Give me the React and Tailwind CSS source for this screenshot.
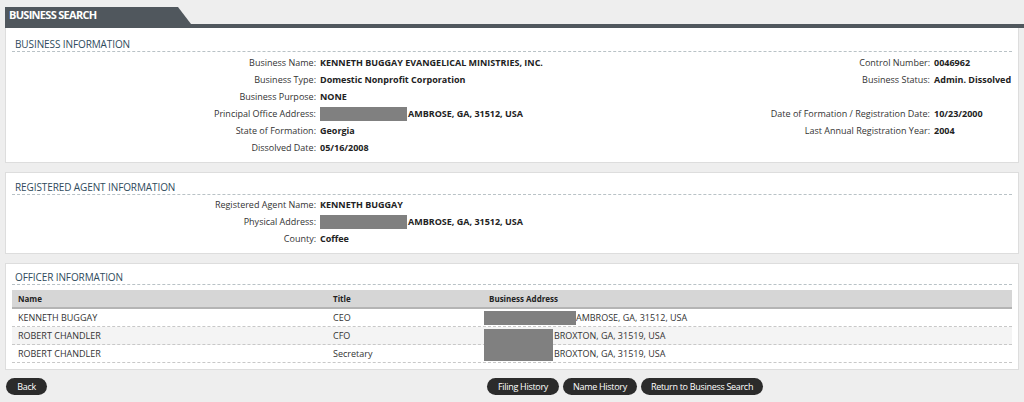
const REDACT = 'bg-[#808080]'

const Field = ({ label, value, redact, labelW }) => (
  <div className="flex items-center h-[17px]">
    <span className={`${labelW} text-right pr-[4px] text-[#333]`}>{label}</span>
    {redact && <span className={`inline-block w-[87px] h-[14px] mr-[1px] ${REDACT}`} />}
    <span className="font-bold text-[#222]">{value}</span>
  </div>
)

const SectionTitle = ({ children }) => (
  <div className="mx-[6px] pl-[3px] h-[15px] leading-[14px] text-[10px] text-[#2f4b5c] border-b border-dashed border-[#b9c2c6] tracking-[-0.1px]">
    {children}
  </div>
)

const officers = [
  { name: 'KENNETH BUGGAY', title: 'CEO', addr: 'AMBROSE, GA, 31512, USA', pad: 'pl-[92px]', bg: 'bg-white' },
  { name: 'ROBERT CHANDLER', title: 'CFO', addr: 'BROXTON, GA, 31519, USA', pad: 'pl-[70px]', bg: 'bg-[#f4f4f4]' },
  { name: 'ROBERT CHANDLER', title: 'Secretary', addr: 'BROXTON, GA, 31519, USA', pad: 'pl-[70px]', bg: 'bg-white' },
]

export default function App() {
  return (
    <div className="w-[1024px] h-[402px] bg-[#eeeeee] overflow-hidden text-[9px] font-['Open_Sans',sans-serif]">
      {/* Tab bar */}
      <div className="pt-[7px] px-[5px]">
        <div className="flex">
          <div className="w-[186px] h-[17px] bg-[#50575d] [clip-path:polygon(0_0,173px_0,186px_17px,0_17px)] pl-[4px] flex items-center text-white text-[11px] font-bold tracking-[-0.7px]">
            BUSINESS SEARCH
          </div>
        </div>
        <div className="h-[4px] bg-[#50575d] mr-[-5px]" />
      </div>

      {/* Business information */}
      <div className="mx-[5px] bg-white border border-t-0 border-[#dddddd] pt-[9px] h-[135px]">
        <SectionTitle>BUSINESS INFORMATION</SectionTitle>
        <div className="flex pt-[2px]">
          <div className="w-[600px]">
            <Field labelW="w-[314px]" label="Business Name:" value="KENNETH BUGGAY EVANGELICAL MINISTRIES, INC." />
            <Field labelW="w-[314px]" label="Business Type:" value="Domestic Nonprofit Corporation" />
            <Field labelW="w-[314px]" label="Business Purpose:" value="NONE" />
            <Field labelW="w-[314px]" label="Principal Office Address:" value="AMBROSE, GA, 31512, USA" redact />
            <Field labelW="w-[314px]" label="State of Formation:" value="Georgia" />
            <Field labelW="w-[314px]" label="Dissolved Date:" value="05/16/2008" />
          </div>
          <div className="flex-1">
            <Field labelW="w-[328px]" label="Control Number:" value="0046962" />
            <Field labelW="w-[328px]" label="Business Status:" value="Admin. Dissolved" />
            <div className="h-[17px]" />
            <Field labelW="w-[328px]" label="Date of Formation / Registration Date:" value="10/23/2000" />
            <Field labelW="w-[328px]" label="Last Annual Registration Year:" value="2004" />
          </div>
        </div>
      </div>

      {/* Registered agent */}
      <div className="mx-[5px] mt-[9px] bg-white border border-[#dddddd] pt-[7px] h-[82px]">
        <SectionTitle>REGISTERED AGENT INFORMATION</SectionTitle>
        <div className="pt-[1px]">
          <Field labelW="w-[314px]" label="Registered Agent Name:" value="KENNETH BUGGAY" />
          <Field labelW="w-[314px]" label="Physical Address:" value="AMBROSE, GA, 31512, USA" redact />
          <Field labelW="w-[314px]" label="County:" value="Coffee" />
        </div>
      </div>

      {/* Officer information */}
      <div className="mx-[5px] mt-[9px] bg-white border border-[#dddddd] pt-[6px] h-[107px]">
        <SectionTitle>OFFICER INFORMATION</SectionTitle>
        <div className="mx-[6px] mt-[5px] relative">
          <div className="flex h-[19px] items-center bg-[#d6d6d6] border-b-2 border-[#b4b4b4] font-bold text-[8px] text-[#222]">
            <span className="w-[321px] pl-[6px]">Name</span>
            <span className="w-[151px]">Title</span>
            <span className="pl-[5px]">Business Address</span>
          </div>
          {officers.map((o, i) => (
            <div key={i} className={`flex h-[18px] items-center border-b border-dashed border-[#c8c8c8] text-[#333] ${o.bg}`}>
              <span className="w-[321px] pl-[6px]">{o.name}</span>
              <span className="w-[151px]">{o.title}</span>
              <span className={o.pad}>{o.addr}</span>
            </div>
          ))}
          <div className={`absolute left-[472px] top-[21px] w-[92px] h-[14px] ${REDACT}`} />
          <div className={`absolute left-[472px] top-[39px] w-[69px] h-[32px] ${REDACT}`} />
        </div>
      </div>

      {/* Buttons */}
      <div className="flex items-center mt-[8px] pl-[6px] text-white text-[9px] tracking-[-0.3px]">
        <button className="h-[17px] w-[41px] rounded-full bg-[#2b2b2b]">Back</button>
        <div className="flex gap-[4px] ml-[440px]">
          <button className="h-[17px] w-[72px] rounded-full bg-[#2b2b2b]">Filing History</button>
          <button className="h-[17px] w-[74px] rounded-full bg-[#2b2b2b]">Name History</button>
          <button className="h-[17px] w-[122px] rounded-full bg-[#2b2b2b]">Return to Business Search</button>
        </div>
      </div>
    </div>
  )
}
